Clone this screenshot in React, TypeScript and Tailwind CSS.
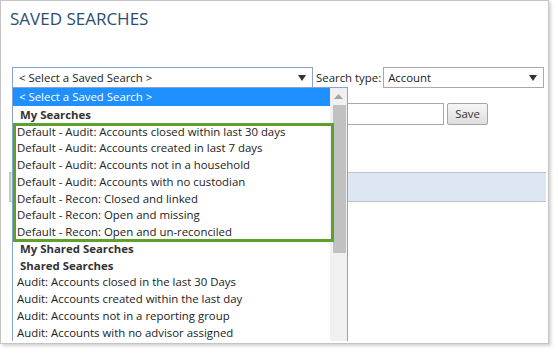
import React from 'react';

const mySearches = [
  'Default - Audit: Accounts closed within last 30 days',
  'Default - Audit: Accounts created in last 7 days',
  'Default - Audit: Accounts not in a household',
  'Default - Audit: Accounts with no custodian',
  'Default - Recon: Closed and linked',
  'Default - Recon: Open and missing',
  'Default - Recon: Open and un-reconciled',
];

const shared = [
  'Audit: Accounts closed in the last 30 Days',
  'Audit: Accounts created within the last day',
  'Audit: Accounts not in a reporting group',
  'Audit: Accounts with no advisor assigned',
];

function Arrow() {
  return (
    <svg width="8" height="6" viewBox="0 0 8 6">
      <path d="M0 0 L8 0 L4 6 Z" fill="#333" />
    </svg>
  );
}

export default function App() {
  return (
    <div className="w-[558px] h-[353px] bg-white font-['Open_Sans',sans-serif] text-[11.4px] text-[#222]">
      <div className="relative w-[549px] h-[344px] border border-[#c4c4c4] shadow-[2px_2px_3px_rgba(0,0,0,0.18)] bg-white overflow-hidden">
        <h1 className="pl-[9px] pt-[6px] text-[17px] leading-[24px] text-[#2b4d70]">SAVED SEARCHES</h1>

        {/* search row */}
        <div className="flex items-center mt-[36px] ml-[11px] h-[21px]">
          <div className="w-[301px] h-[21px] border border-[#86a3d6] flex items-center justify-between pl-[6px] pr-[6px]">
            <span>&lt; Select a Saved Search &gt;</span>
            <Arrow />
          </div>
          <span className="ml-[3px] mr-[2px]">Search type:</span>
          <div className="w-[161px] h-[21px] border border-[#a9a9a9] flex items-center justify-between pl-[4px] pr-[6px]">
            <span>Account</span>
            <Arrow />
          </div>
        </div>

        {/* name + save row (under popup) */}
        <div className="flex items-center mt-[15px] ml-[200px] h-[22px] gap-[3px]">
          <div className="w-[243px] h-[22px] border border-[#a9a9a9]" />
          <button className="w-[41px] h-[22px] border border-[#a5a5a5] rounded-[2px] bg-gradient-to-b from-[#f6f6f6] to-[#dedede] text-[#333]">
            Save
          </button>
        </div>

        <div className="mt-[47px] ml-[8px] w-[537px] h-[30px] bg-[#dce7f3] border-y border-[#b9c3cf] border-l-2 border-l-[#c7c7c7]" />

        {/* open dropdown popup */}
        <div className="absolute left-[11px] top-[86px] w-[336px] h-[254px] border-x border-t border-[#86a3d6] bg-white flex overflow-hidden">
          <div className="relative flex-1 flex flex-col">
            <div className="h-[18px] shrink-0 bg-[#1e90ff] text-white pl-[6px] flex items-center">&lt; Select a Saved Search &gt;</div>
            <div className="h-[16.75px] shrink-0 pl-[7px] font-bold text-[#333] flex items-center">My Searches</div>
            {mySearches.map((s) => (
              <div key={s} className="h-[16.75px] shrink-0 pl-[4px] flex items-center whitespace-nowrap">{s}</div>
            ))}
            <div className="h-[16.75px] shrink-0 pl-[7px] font-bold text-[#333] flex items-center">My Shared Searches</div>
            <div className="h-[16.75px] shrink-0 pl-[7px] font-bold text-[#333] flex items-center">Shared Searches</div>
            {shared.map((s) => (
              <div key={s} className="h-[16.75px] shrink-0 pl-[4px] flex items-center whitespace-nowrap">{s}</div>
            ))}
            <div className="absolute left-0 top-[35px] w-[321px] h-[119px] border-[3px] border-[#5da12a] z-10" />
          </div>
          <div className="w-[17px] bg-[#f0f0f0] flex flex-col items-center">
            <div className="h-[17px] flex items-center justify-center">
              <svg width="9" height="5" viewBox="0 0 9 5"><path d="M0 5 L4.5 0 L9 5 Z" fill="#a3a3a3" /></svg>
            </div>
            <div className="w-[13px] ml-[1px] h-[148px] bg-[#c1c1c1]" />
          </div>
        </div>
      </div>
    </div>
  );
}
